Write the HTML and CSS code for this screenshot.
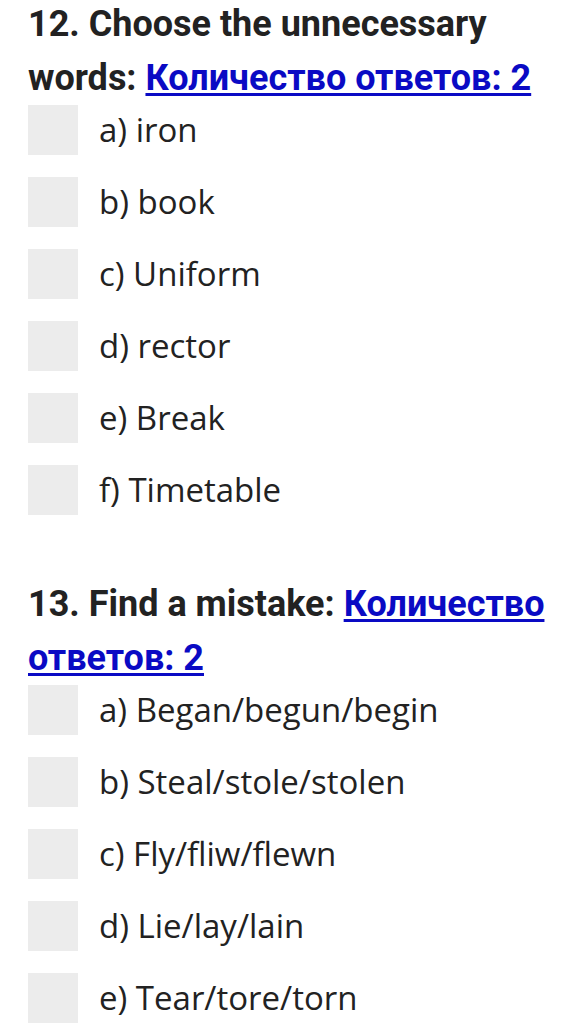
FILE: index.html
```html
<!DOCTYPE html>
<html>
<head>
<meta charset="utf-8">
<link rel="stylesheet" href="styles.css">
</head>
<body>
<div class="page">
  <section class="question">
    <h2 class="q-title">12. Choose the unnecessary words: <a class="q-link" href="#">Количество ответов: 2</a></h2>
    <ul class="options">
      <li class="option"><span class="box"></span><span class="label">a) iron</span></li>
      <li class="option"><span class="box"></span><span class="label">b) book</span></li>
      <li class="option"><span class="box"></span><span class="label">c) Uniform</span></li>
      <li class="option"><span class="box"></span><span class="label">d) rector</span></li>
      <li class="option"><span class="box"></span><span class="label">e) Break</span></li>
      <li class="option"><span class="box"></span><span class="label">f) Timetable</span></li>
    </ul>
  </section>
  <section class="question">
    <h2 class="q-title">13. Find a mistake: <a class="q-link" href="#">Количество ответов: 2</a></h2>
    <ul class="options">
      <li class="option"><span class="box"></span><span class="label">a) Began/begun/begin</span></li>
      <li class="option"><span class="box"></span><span class="label">b) Steal/stole/stolen</span></li>
      <li class="option"><span class="box"></span><span class="label">c) Fly/fliw/flewn</span></li>
      <li class="option"><span class="box"></span><span class="label">d) Lie/lay/lain</span></li>
      <li class="option"><span class="box"></span><span class="label">e) Tear/tore/torn</span></li>
    </ul>
  </section>
</div>
</body>
</html>
```
FILE: styles.css
```css
html, body {
  margin: 0;
  padding: 0;
  background: #ffffff;
}
.page {
  padding: 0 20px 0 28px;
  display: flex;
  flex-direction: column;
  gap: 65px;
}
.question {
  display: flex;
  flex-direction: column;
}
.q-title {
  margin: -3px 0 0 0;
  font-family: Roboto, "Noto Sans", sans-serif;
  font-weight: 700;
  font-size: 36px;
  line-height: 54px;
  color: #222222;
}
.q-link {
  color: #0a0ac4;
  text-decoration: underline;
  text-decoration-thickness: 3px;
  text-underline-offset: 3px;
}
.options {
  list-style: none;
  margin: 0;
  padding: 0;
  display: flex;
  flex-direction: column;
  gap: 22px;
}
.option {
  display: flex;
  align-items: center;
  gap: 21px;
  height: 50px;
}
.box {
  width: 50px;
  height: 50px;
  background: #ececec;
  flex: none;
}
.label {
  font-family: "Open Sans", "Noto Sans", sans-serif;
  font-size: 33px;
  line-height: 40px;
  color: #222222;
}
```
